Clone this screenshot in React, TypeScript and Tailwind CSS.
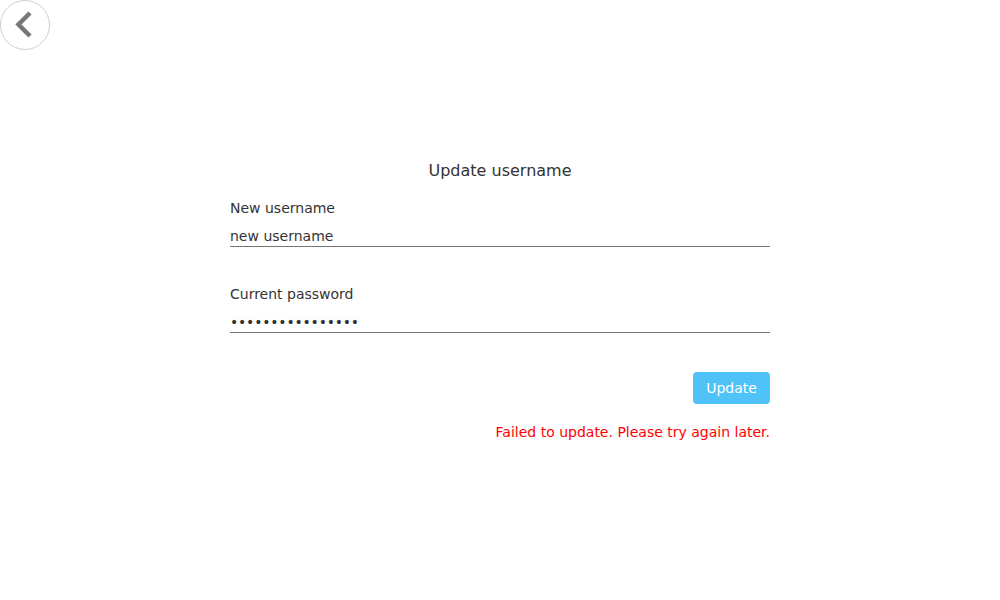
import React from "react";

export default function App() {
  return (
    <div className="w-[1000px] h-[600px] bg-white relative" style={{ fontFamily: '"DejaVu Sans", sans-serif' }}>
      <button className="absolute left-0 top-0 w-[50px] h-[50px] rounded-full border border-[#cfcfcf] bg-white flex items-center justify-center">
        <svg width="50" height="50" viewBox="0 0 50 50" className="absolute left-[-1px] top-[-1px]">
          <path d="M30 13 L18.5 24.5 L30 36" fill="none" stroke="#777777" strokeWidth="4.5" strokeLinecap="butt" strokeLinejoin="miter" />
        </svg>
      </button>
      <div className="w-[540px] mx-auto pt-[161px] flex flex-col text-[#333]">
        <div className="text-center text-[16px] leading-[20px]">Update username</div>
        <div className="mt-[19px] text-[14px] leading-[17px]">New username</div>
        <input
          className="mt-[9px] h-[21px] border-b border-[#757575] text-[14px] leading-[17px] outline-none text-[#333] p-0"
          defaultValue="new username"
          style={{ fontFamily: '"DejaVu Sans", sans-serif' }}
        />
        <div className="mt-[39px] text-[14px] leading-[17px]">Current password</div>
        <input
          type="password"
          className="mt-[9px] h-[21px] border-b border-[#757575] text-[14px] leading-[17px] outline-none text-[#333] p-0 tracking-[-0.2px]"
          defaultValue="abcdefghijklmnop"
          style={{ fontFamily: '"DejaVu Sans", sans-serif' }}
        />
        <div className="mt-[39px] flex justify-end">
          <button className="w-[77px] h-[32px] rounded-[4px] bg-[#4fc3f7] text-white text-[14px]" style={{ fontFamily: '"DejaVu Sans", sans-serif' }}>
            Update
          </button>
        </div>
        <div className="mt-[20px] text-right text-[14px] leading-[17px] text-[#ff0000]">Failed to update. Please try again later.</div>
      </div>
    </div>
  );
}
